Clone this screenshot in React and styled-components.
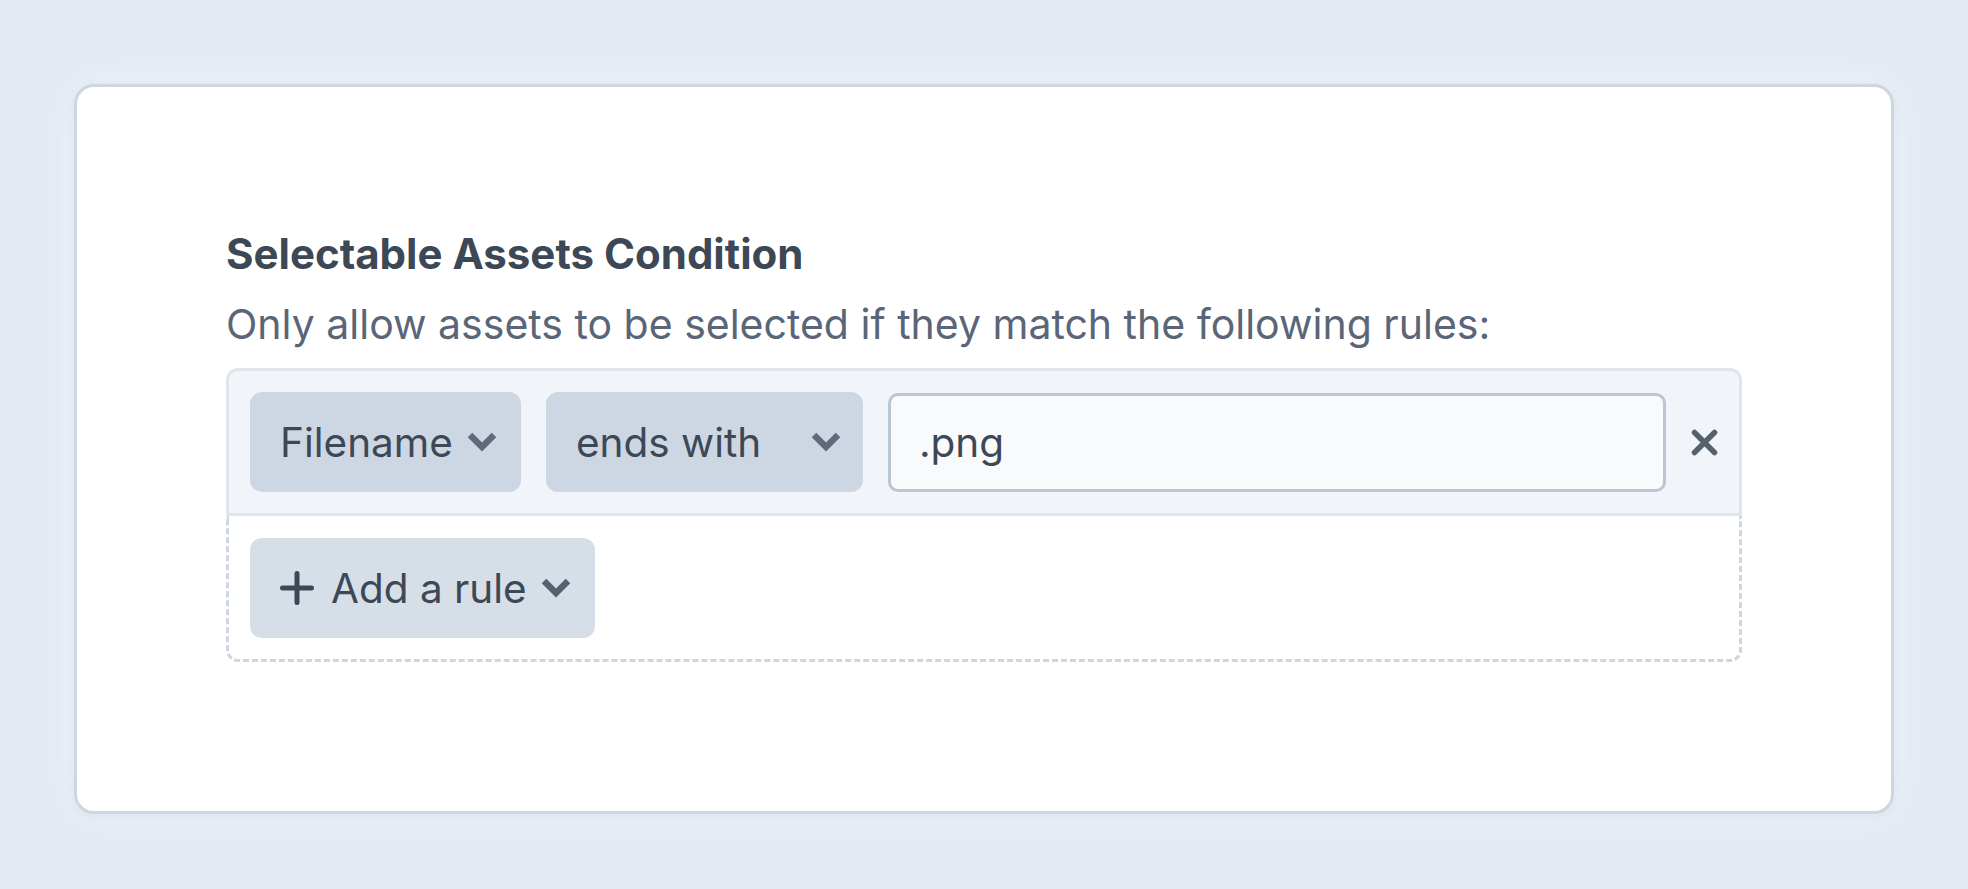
import React from "react";
import styled, { createGlobalStyle } from "styled-components";

const Global = createGlobalStyle`
  html, body { margin: 0; padding: 0; background: #e3eaf3; }
  body { font-family: Inter, "Noto Sans", sans-serif; -webkit-font-smoothing: antialiased; }
  * { box-sizing: border-box; }
`;

const Page = styled.div`
  padding: 84px 74px 74px;
  min-height: 889px;
`;

const Card = styled.section`
  background: #ffffff;
  border: 3px solid #cdd7e3;
  border-radius: 20px;
  padding: 142px 149px 149px;
  box-shadow: 0 2px 8px rgba(100, 116, 139, 0.08), 0 0 40px rgba(241, 245, 250, 0.9);
`;

const Title = styled.h2`
  margin: 0 0 20px;
  font-size: 42px;
  line-height: 50px;
  font-weight: 700;
  color: #3d4856;
`;

const Description = styled.p`
  margin: 0 0 19px;
  font-size: 41px;
  line-height: 50px;
  font-weight: 400;
  color: #5a6677;
`;

const Rules = styled.div`
  display: flex;
  flex-direction: column;
`;

const RuleRow = styled.div`
  display: flex;
  align-items: center;
  gap: 25px;
  padding: 21px;
  background: #f1f5f9;
  border: 3px solid #dfe6ee;
  border-radius: 12px 12px 0 0;
`;

const SelectButton = styled.button`
  display: flex;
  align-items: center;
  justify-content: ${(p) => (p.$width ? "space-between" : "flex-start")};
  gap: 14px;
  height: 100px;
  width: ${(p) => (p.$width ? `${p.$width}px` : "auto")};
  padding: 0 ${(p) => p.$padRight || 24}px 0 30px;
  border: none;
  border-radius: 12px;
  background: ${(p) => (p.$light ? "#d6dee8" : "#cdd7e3")};
  color: #3d4856;
  font-family: inherit;
  font-size: 40.5px;
  font-weight: 400;
  flex-shrink: 0;
  cursor: pointer;
`;

const Label = styled.span`
  display: flex;
  align-items: center;
  gap: 17px;
`;

const ValueInput = styled.input`
  flex: 1;
  min-width: 0;
  height: 99px;
  padding: 0 28px;
  border: 3px solid #bac6d5;
  border-radius: 10px;
  background: #f8fafc;
  color: #3d4856;
  font-family: inherit;
  font-size: 40.5px;
  outline: none;
`;

const RemoveButton = styled.button`
  display: flex;
  align-items: center;
  justify-content: center;
  width: 27px;
  height: 27px;
  padding: 0;
  border: none;
  background: transparent;
  color: #56616e;
  flex-shrink: 0;
  cursor: pointer;
`;

const AddArea = styled.div`
  display: flex;
  padding: 22px 21px 21px;
  border: 3px dashed #cdd6e1;
  border-top: none;
  border-radius: 0 0 12px 12px;
  background: #ffffff;
`;

const Chevron = ({ color = "#5f6b7a" }) => (
  <svg width="30" height="20" viewBox="0 0 30 20" fill="none">
    <path d="M3 3 L15 15 L27 3" stroke={color} strokeWidth="6.5" strokeLinecap="butt" strokeLinejoin="miter" />
  </svg>
);

const Cross = () => (
  <svg width="27" height="27" viewBox="0 0 27 27" fill="none">
    <path d="M3.5 3.5 L23.5 23.5 M23.5 3.5 L3.5 23.5" stroke="currentColor" strokeWidth="5.5" strokeLinecap="round" />
  </svg>
);

const Plus = () => (
  <svg width="34" height="34" viewBox="0 0 34 34" fill="none">
    <path d="M17 2.5 V31.5 M2.5 17 H31.5" stroke="#3d4856" strokeWidth="5" strokeLinecap="round" />
  </svg>
);

export default function App() {
  return (
    <>
      <Global />
      <Page>
        <Card>
          <Title>Selectable Assets Condition</Title>
          <Description>Only allow assets to be selected if they match the following rules:</Description>
          <Rules>
            <RuleRow>
              <SelectButton $padRight={24}>
                <span>Filename</span>
                <Chevron />
              </SelectButton>
              <SelectButton $width={317} $padRight={22}>
                <span>ends with</span>
                <Chevron />
              </SelectButton>
              <ValueInput defaultValue=".png" />
              <RemoveButton aria-label="Remove rule">
                <Cross />
              </RemoveButton>
            </RuleRow>
            <AddArea>
              <SelectButton $light>
                <Label>
                  <Plus />
                  <span>Add a rule</span>
                </Label>
                <Chevron color="#56616e" />
              </SelectButton>
            </AddArea>
          </Rules>
        </Card>
      </Page>
    </>
  );
}
